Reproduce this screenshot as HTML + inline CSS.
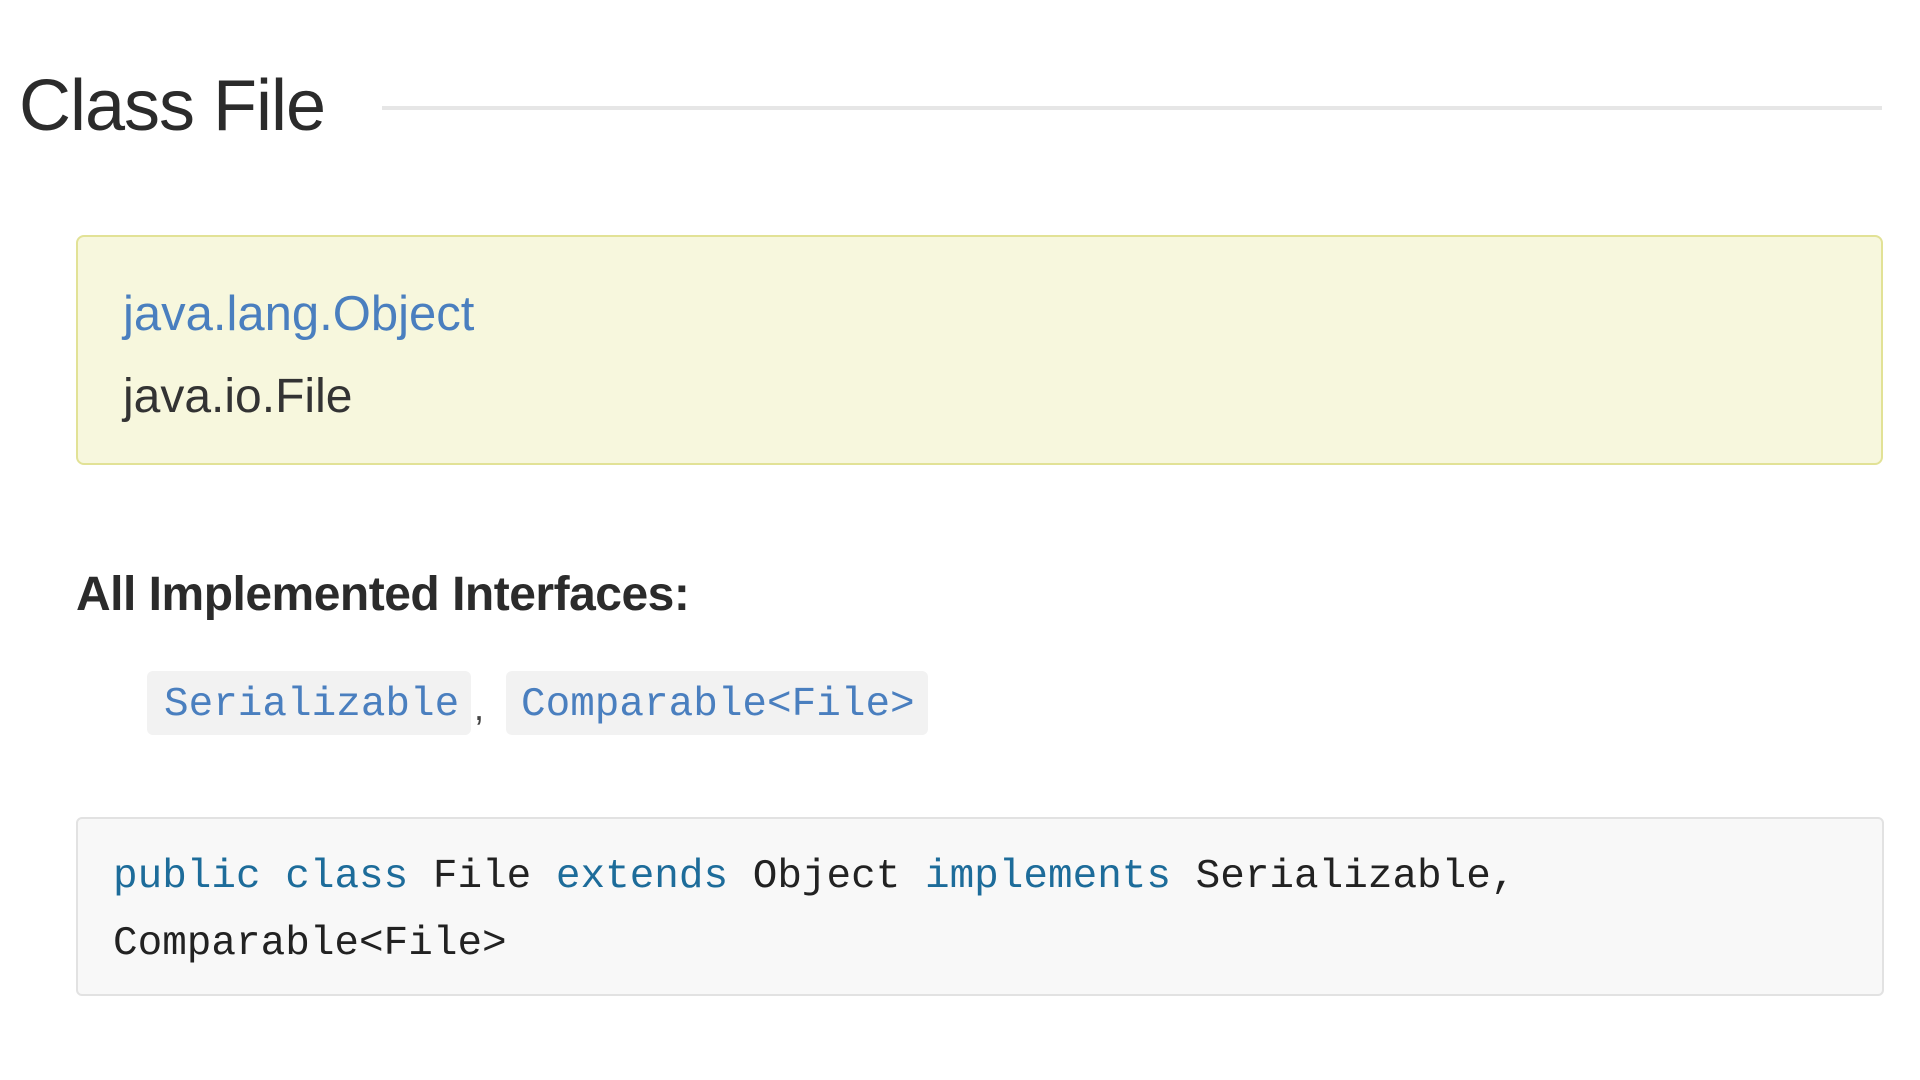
<!DOCTYPE html>
<html><head><meta charset="utf-8"><style>
html,body{margin:0;padding:0;width:1920px;height:1080px;background:#fff;overflow:hidden;position:relative}
div,span{position:absolute;white-space:pre}
.s{font-family:"Liberation Sans",sans-serif}
.m{font-family:"Liberation Mono",monospace;font-size:41px;line-height:41px}
.k{position:static;color:#1d6c9a}
</style></head><body>
<div class="s" style="left:19px;top:70px;font-size:72px;line-height:72px;color:#2b2b2b;letter-spacing:-1px">Class File</div>
<div style="left:382px;top:106px;width:1500px;height:4px;background:#e6e6e6"></div>

<div style="left:76px;top:235px;width:1803px;height:226px;background:#f7f7dd;border:2px solid #e2e296;border-radius:8px"></div>
<div class="s" style="left:123px;top:290px;font-size:49px;line-height:49px;color:#4a7fbf">java.lang.Object</div>
<div class="s" style="left:123px;top:373px;font-size:48px;line-height:48px;color:#333">java.io.File</div>

<div class="s" style="left:76px;top:571px;font-size:48px;line-height:48px;color:#2b2b2b;font-weight:bold;letter-spacing:-0.5px">All Implemented Interfaces:</div>

<div style="left:147px;top:671px;width:324px;height:64px;background:#f2f2f2;border-radius:6px"></div>
<div style="left:506px;top:671px;width:422px;height:64px;background:#f2f2f2;border-radius:6px"></div>
<div class="m" style="left:164px;top:685px;color:#4a7fbf">Serializable</div>
<div class="s" style="left:474px;top:690px;font-size:36px;line-height:36px;color:#444">,</div>
<div class="m" style="left:521px;top:685px;color:#4a7fbf">Comparable&lt;File&gt;</div>

<div style="left:76px;top:817px;width:1804px;height:175px;background:#f8f8f8;border:2px solid #e2e2e2;border-radius:6px"></div>
<div class="m" style="left:113px;top:857px;color:#222"><span class="k">public</span> <span class="k">class</span> File <span class="k">extends</span> Object <span class="k">implements</span> Serializable,</div>
<div class="m" style="left:113px;top:924px;color:#222">Comparable&lt;File&gt;</div>
</body></html>
